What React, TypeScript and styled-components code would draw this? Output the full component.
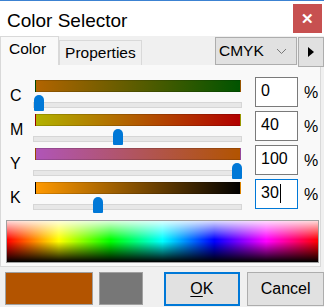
import React from "react";
import styled, { createGlobalStyle } from "styled-components";

const GlobalStyle = createGlobalStyle`
  html, body {
    margin: 0;
    padding: 0;
    background: #f0f0f0;
  }
  * {
    box-sizing: border-box;
  }
`;

const Window = styled.div`
  width: 324px;
  height: 307px;
  display: flex;
  flex-direction: column;
  background: #f0f0f0;
  border-top: 1px solid #3c82d2;
  font-family: "Liberation Sans", Arial, sans-serif;
  color: #000;
  overflow: hidden;
`;

const TitleBar = styled.div`
  height: 35px;
  background: #fff;
  display: flex;
  align-items: flex-start;
  justify-content: space-between;
  padding: 3px 2px 0 7px;
`;

const Title = styled.div`
  font-size: 19px;
  line-height: 22px;
  margin-top: 6px;
`;

const CloseButton = styled.div`
  width: 29px;
  height: 29px;
  background: #c75050;
  color: #fff;
  display: flex;
  align-items: center;
  justify-content: center;
  font-size: 15px;
  font-weight: bold;
`;

const TabRow = styled.div`
  height: 29px;
  display: flex;
  align-items: flex-end;
`;

const Tab = styled.div<{ $active?: boolean }>`
  height: ${(p) => (p.$active ? 29 : 25)}px;
  padding: 0 ${(p) => (p.$active ? 12 : 5)}px 0 ${(p) => (p.$active ? 8 : 5)}px;
  background: ${(p) => (p.$active ? "#f9f9f9" : "#f0f0f0")};
  border: 1px solid #d9d9d9;
  border-bottom: none;
  font-size: 15.5px;
  display: flex;
  align-items: center;
  padding-bottom: ${(p) => (p.$active ? 4 : 0)}px;
`;

const Spacer = styled.div`
  flex: 1;
`;

const Combo = styled.div`
  width: 82px;
  height: 28px;
  align-self: flex-start;
  margin-top: 1px;
  background: #e1e1e1;
  border: 1px solid #adadad;
  display: flex;
  align-items: center;
  justify-content: space-between;
  padding: 0 9px 0 3px;
  font-size: 15.5px;
`;

const ArrowButton = styled.div`
  width: 26px;
  height: 30px;
  align-self: flex-start;
  margin-top: 1px;
  margin-left: 1px;
  background: #e1e1e1;
  border: 1px solid #adadad;
  display: flex;
  align-items: center;
  justify-content: center;
  margin-bottom: -3px;
  position: relative;
  z-index: 1;
`;

const Panel = styled.div`
  width: 321px;
  height: 202px;
  background: #f9f9f9;
  border: 1px solid #d9d9d9;
  border-top: none;
  padding: 12px 0 0 4px;
  display: flex;
  flex-direction: column;
`;

const Rows = styled.div`
  display: flex;
  flex-direction: column;
`;

const Row = styled.div`
  height: 34px;
  display: flex;
  align-items: flex-start;
`;

const Label = styled.div`
  width: 28px;
  padding-left: 5px;
  margin-top: 4px;
  font-size: 16px;
  height: 29px;
  display: flex;
  align-items: center;
`;

const SliderColumn = styled.div`
  width: 211px;
  display: flex;
  flex-direction: column;
  position: relative;
`;

const Bar = styled.div<{ $from: string; $to: string }>`
  margin: 3px 0 0 2px;
  width: 206px;
  height: 12px;
  background: linear-gradient(to right, ${(p) => p.$from}, ${(p) => p.$to});
  border: 1px solid rgba(0, 0, 0, 0.15);
`;

const Track = styled.div`
  margin-top: 10px;
  width: 209px;
  height: 6px;
  background: #e7e7e7;
  border: 1px solid #d6d6d6;
`;

const Thumb = styled.div`
  position: absolute;
  top: 18px;
  width: 10px;
  height: 16px;
  background: #0078d7;
  border-radius: 5px 5px 1px 1px;
`;

const ValueBox = styled.div<{ $focused?: boolean }>`
  margin-left: 11px;
  width: 43px;
  height: 30px;
  background: #fff;
  border: 1px solid ${(p) => (p.$focused ? "#0078d7" : "#7a7a7a")};
  font-size: 16px;
  padding: 4px 0 0 5px;
  display: flex;
  align-items: flex-start;
`;

const Caret = styled.span`
  display: inline-block;
  width: 1px;
  height: 19px;
  background: #000;
  margin-left: 1px;
`;

const Percent = styled.div`
  margin-left: 6px;
  font-size: 16px;
  line-height: 32px;
`;

const Spectrum = styled.div`
  margin: 7px 0 0 1px;
  width: 313px;
  height: 43px;
  border: 1px solid #a0a0a0;
  background: linear-gradient(
      to bottom,
      rgba(255, 255, 255, 0.85) 0%,
      rgba(255, 255, 255, 0) 45%,
      rgba(0, 0, 0, 0) 50%,
      #000 100%
    ),
    linear-gradient(to right, #f00, #ff0, #0f0, #0ff, #00f, #f0f, #f00);
`;

const BottomRow = styled.div`
  display: flex;
  align-items: flex-start;
  padding: 5px 0 0 5px;
`;

const Swatch = styled.div<{ $color: string; $w: number }>`
  width: ${(p) => p.$w}px;
  height: 33px;
  margin-right: 6px;
  background: ${(p) => p.$color};
  border: 1px solid #a0a0a0;
`;

const Button = styled.div<{ $primary?: boolean }>`
  width: 77px;
  height: 34px;
  margin-left: ${(p) => (p.$primary ? 15 : 7)}px;
  background: #e1e1e1;
  border: ${(p) => (p.$primary ? "2px solid #0078d7" : "1px solid #adadad")};
  display: flex;
  align-items: center;
  justify-content: center;
  font-size: 16px;
  u {
    text-decoration: underline;
    text-underline-offset: 2px;
  }
`;

type Channel = {
  name: string;
  value: number;
  from: string;
  to: string;
  focused?: boolean;
};

const channels: Channel[] = [
  { name: "C", value: 0, from: "#b26400", to: "#005400" },
  { name: "M", value: 40, from: "#b2b200", to: "#b20000" },
  { name: "Y", value: 100, from: "#b055b8", to: "#b25400" },
  { name: "K", value: 30, from: "#ff9900", to: "#000000", focused: true },
];

const Chevron = () => (
  <svg width="11" height="7" viewBox="0 0 11 7">
    <path d="M1 1 L5.5 5.5 L10 1" fill="none" stroke="#777" strokeWidth="1" />
  </svg>
);

const Play = () => (
  <svg width="8" height="12" viewBox="0 0 8 12">
    <path d="M1 1 L7 6 L1 11 Z" fill="#000" />
  </svg>
);

export default function App() {
  return (
    <>
      <GlobalStyle />
      <Window>
        <TitleBar>
          <Title>Color Selector</Title>
          <CloseButton>✕</CloseButton>
        </TitleBar>
        <TabRow>
          <Tab $active>Color</Tab>
          <Tab>Properties</Tab>
          <Spacer />
          <Combo>
            CMYK
            <Chevron />
          </Combo>
          <ArrowButton>
            <Play />
          </ArrowButton>
        </TabRow>
        <Panel>
          <Rows>
            {channels.map((c) => (
              <Row key={c.name}>
                <Label>{c.name}</Label>
                <SliderColumn>
                  <Bar $from={c.from} $to={c.to} />
                  <Track />
                  <Thumb style={{ left: 1 + c.value * 1.98 }} />
                </SliderColumn>
                <ValueBox $focused={c.focused}>
                  {c.value}
                  {c.focused && <Caret />}
                </ValueBox>
                <Percent>%</Percent>
              </Row>
            ))}
          </Rows>
          <Spectrum />
        </Panel>
        <BottomRow>
          <Swatch $color="#b35400" $w={88} />
          <Swatch $color="#777777" $w={44} />
          <Button $primary>
            <u>O</u>K
          </Button>
          <Button>Cancel</Button>
        </BottomRow>
      </Window>
    </>
  );
}
